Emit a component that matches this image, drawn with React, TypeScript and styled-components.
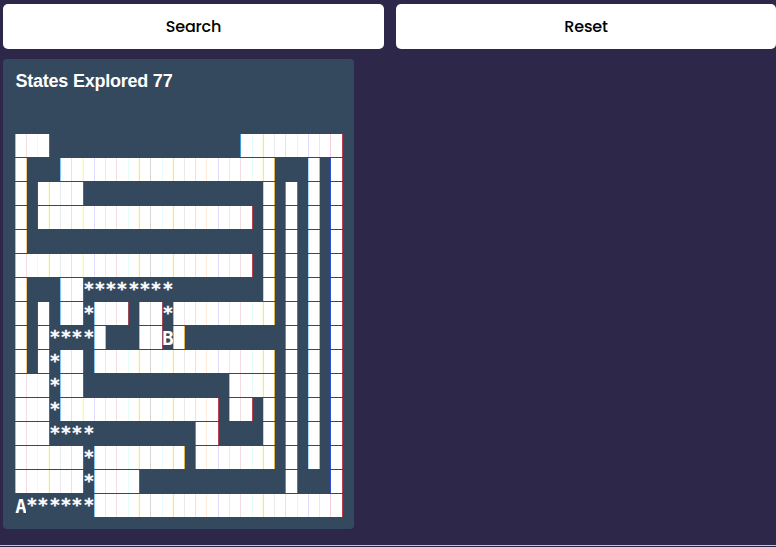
import React from "react";
import styled, { createGlobalStyle } from "styled-components";

const GlobalStyle = createGlobalStyle`
  * { box-sizing: border-box; }
  body { margin: 0; background: #2d2849; overflow: hidden; }
`;

const Page = styled.main`
  display: flex;
  flex-direction: column;
  width: 776px;
  height: 547px;
  background: #2d2849;
`;

const Toolbar = styled.div`
  display: grid;
  grid-template-columns: 381px 380px;
  gap: 12px;
  padding: 4px 0 0 3px;
`;

const ActionButton = styled.button`
  height: 45px;
  border: 0;
  border-radius: 5px;
  padding: 0;
  background: #fff;
  color: #000;
  font: 500 16px/45px Poppins, Inter, sans-serif;
  letter-spacing: -0.16px;
`;

const Panel = styled.section`
  width: 351px;
  height: 470px;
  margin: 10px 0 0 3px;
  padding: 10px 12px 12px;
  border-radius: 4px;
  background: #34495e;
`;

const Heading = styled.h1`
  margin: 0 0 41px;
  padding-left: 0.5px;
  color: #fff;
  font: 700 18px/24px "Liberation Sans", Arial, sans-serif;
  letter-spacing: -0.23px;
`;

const Maze = styled.div`
  display: flex;
  flex-direction: column;
  gap: 1px;
`;

const MazeRow = styled.div`
  display: flex;
  height: 23px;
`;

const Cell = styled.span<{ $width: number; $wall: boolean; $seam: string }>`
  flex: 0 0 ${({ $width }) => $width}px;
  min-width: 0;
  height: 23px;
  border-left: 1px solid ${({ $seam }) => $seam};
  background: ${({ $wall }) => ($wall ? "#fff" : "#34495e")};
`;

const Glyph = styled.span<{ $star: boolean }>`
  display: block;
  width: 12px;
  margin-left: -1px;
  color: #fff;
  text-align: center;
  font: 700 ${({ $star }) => ($star ? 18 : 19)}px/${({ $star }) => ($star ? 22 : 24)}px "DejaVu Sans Mono", monospace;
  -webkit-text-stroke: ${({ $star }) => ($star ? 0.3 : 0)}px #fff;
`;

const Footer = styled.hr`
  width: 100%;
  height: 1px;
  margin: 16px 0 0;
  border: 0;
  background: #c8c5d0;
`;

const rows = [
  "###.................#########",
  "#...###################...#.#",
  "#.####................#.#.#.#",
  "#.###################.#.#.#.#",
  "#.....................#.#.#.#",
  "#####################.#.#.#.#",
  "#...##********........#.#.#.#",
  "#.#.##*###.##*#########.#.#.#",
  "#.#****#...##B#.........#.#.#",
  "#.#*##.################.#.#.#",
  "###*##.............####.#.#.#",
  "###*##############.##.#.#.#.#",
  "###****.........##....#.#.#.#",
  "######*########.#######.#.#.#",
  "######*####.............#...#",
  "A******######################",
];

const edges = [
  15, 26, 37, 49, 60, 71, 83, 94, 105, 116, 128, 139, 150, 162, 173, 184,
  195, 206, 218, 229, 240, 252, 263, 274, 285, 297, 308, 319, 330, 342, 343,
];

const LAVENDER = "#e0dcff";
const GREY = "#e9e9ef";
const PINK = "#f3dfe3";
const MINT = "#e3fdf8";
const PEACH = "#ffebdc";
const CREAM = "#fffde0";

const pale = [
  "#fff", PINK, MINT, LAVENDER, GREY, PINK, PEACH, LAVENDER, GREY, PINK,
  MINT, LAVENDER, "#d9d5da", MINT, LAVENDER, GREY, "#e9e4e4", PEACH, LAVENDER, GREY,
  PINK, MINT, LAVENDER, GREY, PINK, "#ffe9e9", LAVENDER, GREY, "#f7ccdc",
];

const creamColumns = [2, 5, 10, 13, 21];

const seamColor = (index: number, before: boolean, current: boolean) => {
  if (before && current) return pale[index];
  if (current) {
    if (index === 28) return "#3050d0";
    if (index === 2) return "#2450c2";
    if ([16, 20, 24].includes(index)) return "#419bd4";
    return index > 20 ? "#a8dcfa" : "#83c8f5";
  }
  if (before) {
    if (index === 1) return "#f5ca86";
    if ([8, 15, 23, 27].includes(index)) return "#e3b650";
    if (index === 25) return "#a46055";
    return index < 14 ? "#9c4a56" : "#b84254";
  }
  return "#34495e";
};

const CreamEdge = styled.span`
  display: block;
  width: 1px;
  height: 23px;
  margin-left: auto;
  background: ${CREAM};
`;

export default function App() {
  return (
    <>
      <GlobalStyle />
      <Page>
        <Toolbar>
          <ActionButton>Search</ActionButton>
          <ActionButton>Reset</ActionButton>
        </Toolbar>
        <Panel>
          <Heading>States Explored 77</Heading>
          <Maze>
            {rows.map((row, y) => (
              <MazeRow key={y}>
                {edges.slice(0, -1).map((edge, x) => {
                  const character = row[x] ?? ".";
                  const wall = character === "#";
                  return (
                    <Cell key={x} $width={edges[x + 1] - edge} $wall={wall} $seam={seamColor(x, row[x - 1] === "#", wall)}>
                      {wall && row[x + 1] === "#" && creamColumns.includes(x) && <CreamEdge />}
                      {!wall && character !== "." && <Glyph $star={character === "*"}>{character}</Glyph>}
                    </Cell>
                  );
                })}
              </MazeRow>
            ))}
          </Maze>
        </Panel>
        <Footer />
      </Page>
    </>
  );
}
